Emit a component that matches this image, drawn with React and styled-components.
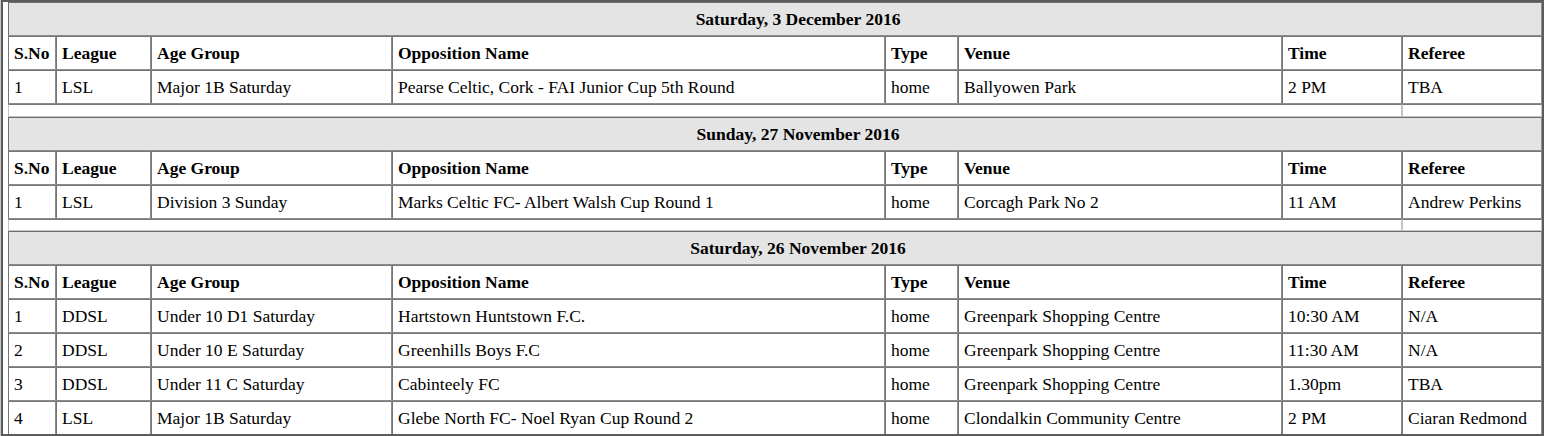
import styled, { createGlobalStyle } from "styled-components";

const GlobalStyle = createGlobalStyle`
  html, body {
    margin: 0;
    padding: 0;
    background: #fff;
  }
  body {
    font-family: "Liberation Serif", "Times New Roman", serif;
    font-size: 17.5px;
    color: #000;
  }
`;

const Frame = styled.div`
  margin-left: 1px;
  padding-left: 5px;
  border: 2px solid #5c5c5c;
  box-shadow: -1px 0 0 #c8c8c8;
  width: 1534px;
  height: 432px;
  overflow: hidden;
`;

const Table = styled.table`
  width: 1534px;
  table-layout: fixed;
  border-collapse: separate;
  border-spacing: 0;
  font-size: 17.5px;
`;

const DateCell = styled.th`
  height: 18px;
  padding: 7px 5px 7px 51px;
  background: #e4e4e4;
  border: 1px solid;
  border-color: #6e6e6e #8c8c8c #8c8c8c #6e6e6e;
  font-weight: bold;
  text-align: center;
  line-height: 18px;
`;

const HeadCell = styled.th`
  height: 18px;
  padding: 7px 5px;
  border: 1px solid;
  border-color: #767676 #8c8c8c #8c8c8c #767676;
  font-weight: bold;
  text-align: left;
  line-height: 18px;
  white-space: nowrap;
`;

const Cell = styled.td`
  height: 18px;
  padding: 7px 5px;
  border: 1px solid;
  border-color: #767676 #8c8c8c #8c8c8c #767676;
  line-height: 18px;
  white-space: nowrap;
  overflow: hidden;
`;

const GapCell = styled.td`
  height: ${(p) => p.$h}px;
  padding: 0;
  border: 1px solid #c4c4c4;
  border-top-color: #767676;
`;

const widths = [48, 95, 241, 493, 73, 324, 120, 140];
const heads = ["S.No", "League", "Age Group", "Opposition Name", "Type", "Venue", "Time", "Referee"];

const sections = [
  {
    date: "Saturday, 3 December 2016",
    gap: 11,
    rows: [
      ["1", "LSL", "Major 1B Saturday", "Pearse Celtic, Cork - FAI Junior Cup 5th Round", "home", "Ballyowen Park", "2 PM", "TBA"],
    ],
  },
  {
    date: "Sunday, 27 November 2016",
    gap: 10,
    rows: [
      ["1", "LSL", "Division 3 Sunday", "Marks Celtic FC- Albert Walsh Cup Round 1", "home", "Corcagh Park No 2", "11 AM", "Andrew Perkins"],
    ],
  },
  {
    date: "Saturday, 26 November 2016",
    rows: [
      ["1", "DDSL", "Under 10 D1 Saturday", "Hartstown Huntstown F.C.", "home", "Greenpark Shopping Centre", "10:30 AM", "N/A"],
      ["2", "DDSL", "Under 10 E Saturday", "Greenhills Boys F.C", "home", "Greenpark Shopping Centre", "11:30 AM", "N/A"],
      ["3", "DDSL", "Under 11 C Saturday", "Cabinteely FC", "home", "Greenpark Shopping Centre", "1.30pm", "TBA"],
      ["4", "LSL", "Major 1B Saturday", "Glebe North FC- Noel Ryan Cup Round 2", "home", "Clondalkin Community Centre", "2 PM", "Ciaran Redmond"],
    ],
  },
];

function Fixture({ section }) {
  return (
    <Table>
      <colgroup>
        {widths.map((w, i) => (
          <col key={i} style={{ width: w }} />
        ))}
      </colgroup>
      <tbody>
        <tr>
          <DateCell colSpan={8}>{section.date}</DateCell>
        </tr>
        <tr>
          {heads.map((h) => (
            <HeadCell key={h}>{h}</HeadCell>
          ))}
        </tr>
        {section.rows.map((r, i) => (
          <tr key={i}>
            {r.map((v, j) => (
              <Cell key={j}>{v}</Cell>
            ))}
          </tr>
        ))}
        {section.gap && (
          <tr>
            <GapCell colSpan={7} $h={section.gap} />
            <GapCell $h={section.gap} />
          </tr>
        )}
      </tbody>
    </Table>
  );
}

export default function App() {
  return (
    <>
      <GlobalStyle />
      <Frame>
        {sections.map((s) => (
          <Fixture key={s.date} section={s} />
        ))}
      </Frame>
    </>
  );
}
